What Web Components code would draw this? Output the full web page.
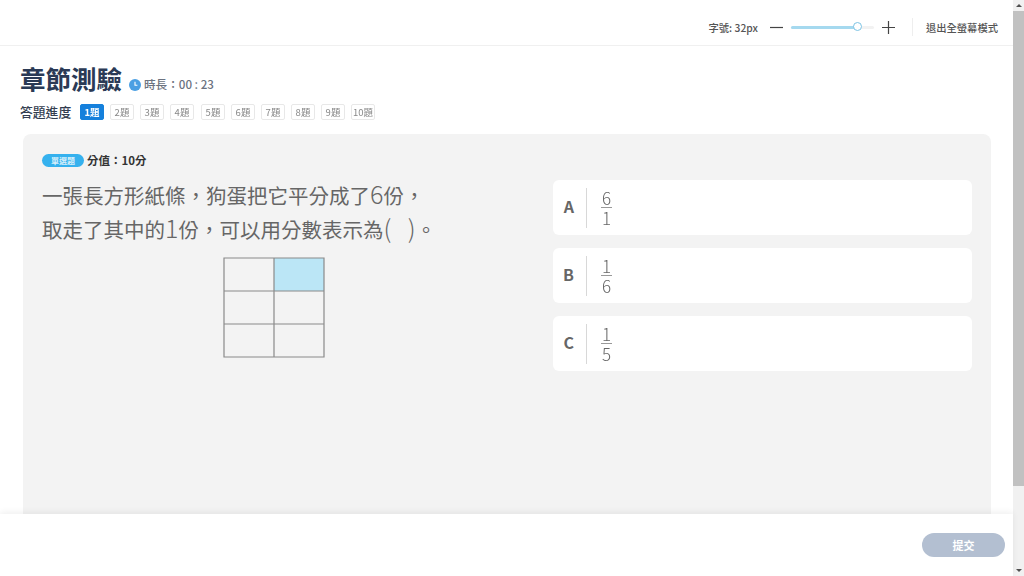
<!DOCTYPE html>
<html lang="zh-Hant">
<head>
<meta charset="utf-8">
<title>章節測驗</title>
<style>
html, body { margin: 0; height: 100%; overflow: hidden; background: #fff; }
body { font-family: "Noto Sans CJK TC", "Noto Sans", sans-serif; }
</style>
</head>
<body>
<exam-page>
    <exam-toolbar slot="top"></exam-toolbar>
    <exam-heading slot="top"></exam-heading>
    <question-card>
        <div slot="stem">
            <question-stem></question-stem>
            <paper-grid></paper-grid>
        </div>
        <answer-option letter="A" top="6" bottom="1" slot="options"></answer-option>
        <answer-option letter="B" top="1" bottom="6" slot="options"></answer-option>
        <answer-option letter="C" top="1" bottom="5" slot="options"></answer-option>
    </question-card>
    <exam-footer slot="bottom"></exam-footer>
</exam-page>
<script>
class ExamPage extends HTMLElement {
    constructor(){
        super()
        this.shadow = this.attachShadow({mode:'open'})
    }
    connectedCallback(){
        this.shadow.innerHTML = `<style>
            :host { display: flex; height: 576px; width: 1024px; overflow: hidden; }
            #main { flex: 1; min-width: 0; display: flex; flex-direction: column; }
            #body { flex: 1; min-height: 0; overflow: hidden; padding: 0 22px 0 23px; }
            #bar { width: 11px; background: #f1f1f1; display: flex; flex-direction: column; align-items: center; }
            #thumb { width: 11px; height: 475px; background: #c1c1c1; margin-top: 11px; }
            .arrow { width: 0; height: 0; border-left: 3px solid transparent; border-right: 3px solid transparent; }
            #up { border-bottom: 3px solid #505050; margin-top: 4px; margin-bottom: -7px; }
            #down { border-top: 3px solid #505050; margin-top: 83px; }
        </style>
        <div id="main">
            <slot name="top"></slot>
            <div id="body"><slot></slot></div>
            <slot name="bottom"></slot>
        </div>
        <div id="bar"><div id="up" class="arrow"></div><div id="thumb"></div><div id="down" class="arrow"></div></div>`
    }
}
customElements.define('exam-page', ExamPage)

class ExamToolbar extends HTMLElement {
    constructor(){
        super()
        this.shadow = this.attachShadow({mode:'open'})
    }
    connectedCallback(){
        this.shadow.innerHTML = `<style>
            :host { display: flex; align-items: center; justify-content: flex-end; border-bottom: 1px solid #f0f0f0; padding-right: 15px; font-size: 10.3px; font-weight: 500; color: #555; padding-top: 9px; box-sizing: border-box; height: 46px; }
            #size { margin-right: 12px; }
            svg { display: block; }
            #slider { width: 83px; height: 3px; background: #f2f2f2; border-radius: 2px; margin: 0 8px; position: relative; }
            #fill { width: 66px; height: 3px; background: #a5d9ef; border-radius: 2px; }
            #knob { position: absolute; left: 62px; top: -4px; width: 7px; height: 7px; border: 1.5px solid #7cc3e4; border-radius: 50%; background: #fff; }
            #sep { width: 1px; height: 18px; background: #eee; margin: 0 13px 0 17px; }
        </style>
        <span id="size">字號: 32px</span>
        <svg width="13" height="13" viewBox="0 0 13 13"><path d="M0 6.500h13" stroke="#444" stroke-width="1.2"/></svg>
        <div id="slider"><div id="fill"></div><div id="knob"></div></div>
        <svg width="13" height="13" viewBox="0 0 13 13"><path d="M0 6.500h13M6.500 0v13" stroke="#444" stroke-width="1.2"/></svg>
        <div id="sep"></div>
        <span>退出全螢幕模式</span>`
    }
}
customElements.define('exam-toolbar', ExamToolbar)

class ExamHeading extends HTMLElement {
    constructor(){
        super()
        this.shadow = this.attachShadow({mode:'open'})
    }
    connectedCallback(){
        let steps = ''
        for (let i = 1; i <= 10; i++) steps += `<span class="step${i === 1 ? ' on' : ''}">${i}題</span>`
        this.shadow.innerHTML = `<style>
            :host { display: block; padding: 14px 0 0 20px; height: 88px; box-sizing: border-box; }
            #title { display: flex; align-items: center; height: 36px; }
            h1 { margin: 0; font-size: 25.500px; font-weight: 700; color: #2b3a55; line-height: 36px; }
            svg { margin: 13px 3px 0 7px; }
            #time { font-size: 11.600px; color: #6b7280; font-weight: 500; margin-top: 11px; }
            #progress { display: flex; align-items: center; margin-top: 6px; }
            #label { font-size: 12.800px; font-weight: 500; color: #333d4f; margin-right: 9px; }
            .step { box-sizing: border-box; width: 24px; height: 16px; margin-right: 6.100px; border: 1px solid #e8e8e8; border-radius: 2px; font-size: 9.500px; line-height: 14px; text-align: center; color: #888; will-change: transform; }
            .step.on { background: #1580dc; border-color: #1580dc; color: #fff; font-weight: 700; }
        </style>
        <div id="title">
            <h1>章節測驗</h1>
            <svg width="12" height="12" viewBox="0 0 13 13"><circle cx="6.500" cy="6.500" r="6.500" fill="#4a9fe3"/><path d="M6.500 3v3.700h2.600" fill="none" stroke="#fff" stroke-width="1.200"/></svg>
            <span id="time">時長：00 : 23</span>
        </div>
        <div id="progress"><span id="label">答題進度</span>${steps}</div>`
    }
}
customElements.define('exam-heading', ExamHeading)

class QuestionCard extends HTMLElement {
    constructor(){
        super()
        this.shadow = this.attachShadow({mode:'open'})
    }
    connectedCallback(){
        this.shadow.innerHTML = `<style>
            :host { display: block; height: 500px; background: #f3f3f3; border-radius: 8px; padding: 18px 19px 0 19px; box-sizing: border-box; }
            #meta { display: flex; align-items: center; height: 16px; font-size: 11.500px; font-weight: 700; color: #333; }
            #tag { width: 42px; height: 13px; border-radius: 7px; background: #35b1ee; color: #d5effb; font-size: 8px; line-height: 13px; text-align: center; margin-right: 3px; }
            #cols { display: flex; margin-top: 3px; }
            #left { width: 511px; }
            #right { flex: 1; padding-top: 9px; display: flex; flex-direction: column; }
        </style>
        <div id="meta"><span id="tag">單選題</span>分值：10分</div>
        <div id="cols">
            <div id="left"><slot name="stem"></slot></div>
            <div id="right"><slot name="options"></slot></div>
        </div>`
    }
}
customElements.define('question-card', QuestionCard)

class QuestionStem extends HTMLElement {
    constructor(){
        super()
        this.shadow = this.attachShadow({mode:'open'})
    }
    connectedCallback(){
        this.shadow.innerHTML = `<style>
            :host { display: block; font-size: 20.500px; line-height: 34px; color: #666; padding-top: 7px; }
            div { height: 34px; }
            .n { font-weight: 300; font-size: 25px; line-height: 20px; color: #666; }
        </style>
        <div>一張長方形紙條，狗蛋把它平分成了<span class="n">6</span>份，</div>
        <div>取走了其中的<span class="n">1</span>份，可以用分數表示為<span class="n">(&nbsp;&nbsp;&nbsp;)</span>。</div>`
    }
}
customElements.define('question-stem', QuestionStem)

class PaperGrid extends HTMLElement {
    constructor(){
        super()
        this.shadow = this.attachShadow({mode:'open'})
    }
    connectedCallback(){
        this.shadow.innerHTML = `<style>
            :host { display: block; margin: 11px 0 0 181px; width: 102px; }
            svg { display: block; }
        </style>
        <svg width="102" height="101" viewBox="0 0 102 101">
            <rect x="51" y="1" width="50" height="33" fill="#bbe6f6"/>
            <path d="M1 1h100v99H1zM51 1v99M1 34h100M1 67h100" fill="none" stroke="#8a8a8a" stroke-width="1.200"/>
        </svg>`
    }
}
customElements.define('paper-grid', PaperGrid)

class AnswerOption extends HTMLElement {
    constructor(){
        super()
        this.shadow = this.attachShadow({mode:'open'})
    }
    connectedCallback(){
        this.shadow.innerHTML = `<style>
            :host { display: flex; align-items: center; height: 55px; margin-bottom: 13px; background: #fff; border-radius: 6px; }
            #letter { width: 21px; text-align: right; font-size: 16px; font-weight: 700; color: #666; margin-bottom: 3px; }
            #line { width: 1px; height: 40px; background: #d8d8d8; margin-left: 12px; margin-right: 14px; }
            #frac { display: flex; flex-direction: column; align-items: center; width: 11px; font-weight: 300; font-size: 17px; line-height: 15px; color: #666; will-change: transform; }
            #frac span { height: 15px; }
            #frac span:first-child { margin-bottom: 2px; }
            #frac span + span { border-top: 1px solid #999; width: 100%; text-align: center; padding-top: 2px; }
        </style>
        <span id="letter">${this.getAttribute('letter')}</span>
        <div id="line"></div>
        <div id="frac"><span>${this.getAttribute('top')}</span><span>${this.getAttribute('bottom')}</span></div>`
    }
}
customElements.define('answer-option', AnswerOption)

class ExamFooter extends HTMLElement {
    constructor(){
        super()
        this.shadow = this.attachShadow({mode:'open'})
    }
    connectedCallback(){
        this.shadow.innerHTML = `<style>
            :host { display: flex; height: 62px; flex: none; align-items: center; justify-content: flex-end; padding: 0 8px 0 0; background: #fff; box-shadow: 0 -2px 6px #00000010; position: relative; }
            button { width: 83px; height: 24px; border: 0; border-radius: 12px; background: #b3bfd1; color: #fff; font: 700 11px "Noto Sans CJK TC", sans-serif; }
        </style>
        <button>提交</button>`
    }
}
customElements.define('exam-footer', ExamFooter)
</script>
</body>
</html>
